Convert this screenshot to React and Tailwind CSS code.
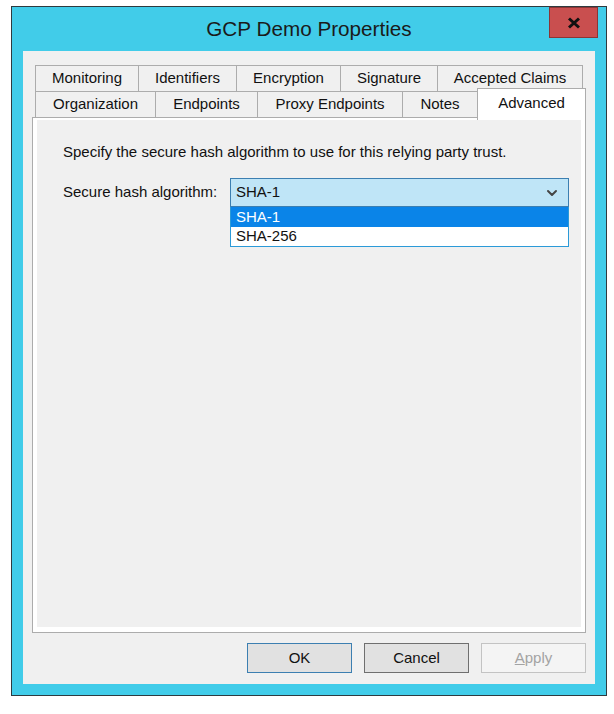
import { ChevronDown } from "lucide-react";

const topTabs = [
  { label: "Monitoring", w: "w-[103px]" },
  { label: "Identifiers", w: "w-[98px]" },
  { label: "Encryption", w: "w-[104px]" },
  { label: "Signature", w: "w-[97px]" },
  { label: "Accepted Claims", w: "w-[146px]", last: true },
];

const bottomTabs = [
  { label: "Organization", w: "w-[120px]" },
  { label: "Endpoints", w: "w-[102px]" },
  { label: "Proxy Endpoints", w: "w-[145px]" },
  { label: "Notes", w: "w-[75px]" },
];

function Tab({ label, w, last }) {
  return (
    <div
      className={`${w} h-full flex items-center justify-center border-t border-l border-[#acacac] bg-[#f0f0f0] text-[15px] text-[#111] ${
        last ? "border-r" : ""
      }`}
    >
      {label}
    </div>
  );
}

export default function App() {
  return (
    <div
      className="w-[614px] h-[714px] bg-white pt-[6px] pl-[11px]"
      style={{ fontFamily: '"Liberation Sans", Arial, sans-serif' }}
    >
      {/* Ventana */}
      <div className="w-[596px] h-[690px] border border-[#2e3a3f] bg-[#41cce9] flex flex-col">
        {/* Barra de título */}
        <div className="relative h-[44px] shrink-0 flex items-center justify-center">
          <span className="text-[20.7px] text-[#1a1a1a] leading-none">GCP Demo Properties</span>
          <div className="absolute top-0 right-[8px] w-[49px] h-[31px] bg-[#c94f4f] border border-[#8c3535] flex items-center justify-center">
            <svg width="14" height="12" viewBox="0 0 14 12">
              <path d="M2 1.5 L12 10.5 M12 1.5 L2 10.5" stroke="#111" strokeWidth="3" />
            </svg>
          </div>
        </div>

        {/* Área cliente */}
        <div className="ml-[11px] w-[572px] h-[633px] bg-[#f0f0f0] pl-[9px] pt-[14px] flex flex-col">
          {/* Pestañas */}
          <div className="ml-[3px] flex h-[26px]">
            {topTabs.map((tab) => (
              <Tab key={tab.label} {...tab} />
            ))}
          </div>
          <div className="ml-[3px] flex h-[26px]">
            {bottomTabs.map((tab) => (
              <Tab key={tab.label} {...tab} />
            ))}
            <div className="relative z-10 -mt-[3px] w-[109px] h-[32px] pb-[3px] bg-white border-t border-x border-[#acacac] flex items-center justify-center text-[15px] text-[#111]">
              Advanced
            </div>
          </div>

          {/* Panel */}
          <div className="w-[554px] h-[516px] border border-[#acacac] bg-white pt-[2px] px-[4px] pb-[5px]">
            <div className="h-full bg-[#f0f0f0] pl-[26px] pt-[23px] text-[15px] text-[#111]">
              <p className="leading-[18px]">Specify the secure hash algorithm to use for this relying party trust.</p>

              <div className="mt-[17px] flex items-center h-[29px]">
                <span className="w-[167px]">Secure hash algorithm:</span>
                <div className="relative w-[339px] h-[29px]">
                  <div className="h-full border border-[#3c7fb1] bg-[#bfe5f7] pl-[5px] pr-[8px] flex items-center justify-between">
                    <span>SHA-1</span>
                    <ChevronDown size={16} strokeWidth={3} className="text-[#454545]" />
                  </div>
                  {/* Lista desplegable */}
                  <div className="absolute left-0 top-full w-full border-x border-b border-[#2b9ad8] bg-white">
                    <div className="h-[20px] bg-[#0a84e8] text-white pl-[5px] flex items-center">SHA-1</div>
                    <div className="h-[19px] pl-[5px] flex items-center">SHA-256</div>
                  </div>
                </div>
              </div>
            </div>
          </div>

          {/* Botones */}
          <div className="mt-[10px] w-[554px] flex justify-end gap-[12px] text-[15px]">
            <button type="button" className="w-[105px] h-[30px] border border-[#3c7fb1] bg-[#e1e1e1] text-[#111]">
              OK
            </button>
            <button type="button" className="w-[105px] h-[30px] border border-[#6f6f6f] bg-[#e1e1e1] text-[#111]">
              Cancel
            </button>
            <button type="button" className="w-[105px] h-[30px] border border-[#c3c3c3] bg-[#f4f4f4] text-[#a3a3a3]">
              <span className="underline">A</span>pply
            </button>
          </div>
        </div>
      </div>
    </div>
  );
}
